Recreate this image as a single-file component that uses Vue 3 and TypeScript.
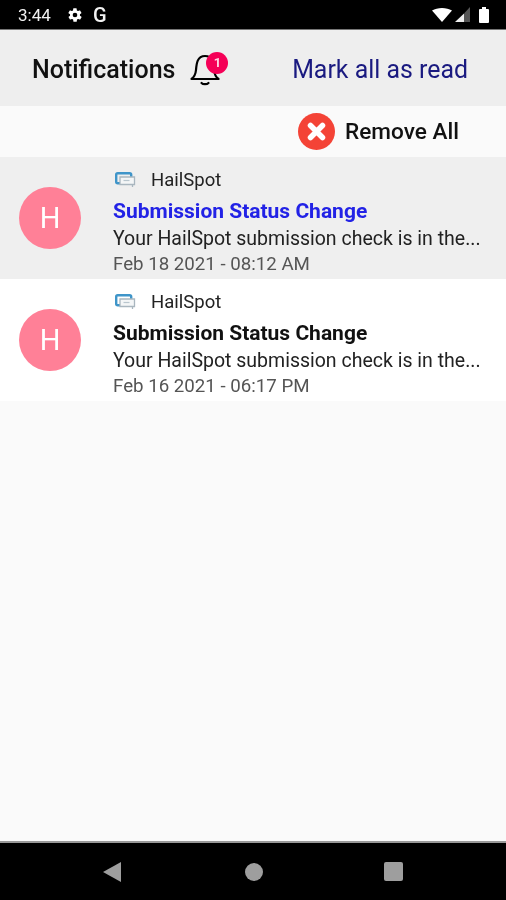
<script setup lang="ts">
interface Notice {
  app: string
  title: string
  body: string
  date: string
  unread: boolean
}

const notices: Notice[] = [
  {
    app: 'HailSpot',
    title: 'Submission Status Change',
    body: 'Your HailSpot submission check is in the...',
    date: 'Feb 18 2021 - 08:12 AM',
    unread: true,
  },
  {
    app: 'HailSpot',
    title: 'Submission Status Change',
    body: 'Your HailSpot submission check is in the...',
    date: 'Feb 16 2021 - 06:17 PM',
    unread: false,
  },
]
</script>

<template>
  <div class="screen">
    <div class="status-bar">
      <div class="status-left">
        <span class="clock">3:44</span>
        <svg class="gear" width="16" height="16" viewBox="0 0 24 24">
          <path
            fill="#fff"
            fill-rule="evenodd"
            d="M19.4 13a7.5 7.5 0 0 0 0-2l2.1-1.6a.5.5 0 0 0 .1-.6l-2-3.5a.5.5 0 0 0-.6-.2l-2.5 1a7.3 7.3 0 0 0-1.7-1l-.4-2.7a.5.5 0 0 0-.5-.4h-4a.5.5 0 0 0-.5.4l-.4 2.7a7.3 7.3 0 0 0-1.7 1l-2.5-1a.5.5 0 0 0-.6.2l-2 3.5a.5.5 0 0 0 .1.6L4.6 11a7.5 7.5 0 0 0 0 2l-2.1 1.6a.5.5 0 0 0-.1.6l2 3.5c.1.2.4.3.6.2l2.5-1c.5.4 1.1.7 1.7 1l.4 2.7c0 .2.2.4.5.4h4c.3 0 .5-.2.5-.4l.4-2.7c.6-.3 1.2-.6 1.7-1l2.500 1c.2.1.5 0 .6-.2l2-3.5a.5.5 0 0 0-.1-.6zM12 15.500a3.500 3.500 0 1 1 0-7 3.500 3.500 0 0 1 0 7z"
          />
        </svg>
        <span class="g-mark">G</span>
      </div>
      <div class="status-right">
        <svg width="20" height="14" viewBox="0 0 20 14">
          <path fill="#fff" d="M0 2.500C2.800.9 6.200 0 10 0s7.200.9 10 2.500L10 14z" />
        </svg>
        <svg class="signal" width="15" height="15" viewBox="0 0 15 15">
          <path fill="#eee" d="M9 15V6.500L0 15z" />
          <path fill="#555" d="M9 15V6.500L15 0v15z" />
        </svg>
        <svg class="battery" width="10" height="16" viewBox="0 0 10 16">
          <path fill="#fff" d="M3 0h4v2h2a1 1 0 0 1 1 1v12a1 1 0 0 1-1 1H1a1 1 0 0 1-1-1V3a1 1 0 0 1 1-1h2z" />
        </svg>
      </div>
    </div>

    <header class="top-bar">
      <div class="title-wrap">
        <h1 class="page-title">Notifications</h1>
        <div class="bell">
          <svg width="30" height="33" viewBox="0 0 30 33" fill="none" stroke="#000" stroke-width="2.200">
            <path d="M1.500 26c2.800-2 4-4 4.500-9 .5-6 1-14 9-14s8.500 8 9 14c.5 5 1.700 7 4.500 9z" stroke-linejoin="round" />
            <path d="M11.500 30c1.500 1.600 5.500 1.600 7 0" stroke-linecap="round" />
          </svg>
          <span class="badge">1</span>
        </div>
      </div>
      <a class="mark-read">Mark all as read</a>
    </header>

    <div class="action-row">
      <svg width="37" height="37" viewBox="0 0 37 37">
        <circle cx="18.500" cy="18.500" r="18.500" fill="#f44336" />
        <path d="M12.500 12.500l12 12M24.500 12.500l-12 12" stroke="#fff" stroke-width="5.500" stroke-linecap="round" />
      </svg>
      <span class="remove-label">Remove All</span>
    </div>

    <ul class="list">
      <li v-for="(item, i) in notices" :key="i" class="item" :class="{ unread: item.unread }">
        <div class="avatar">H</div>
        <div class="content">
          <div class="app-row">
            <svg width="21" height="16" viewBox="0 0 21 16" fill="none">
              <rect x="1.200" y="1.200" width="15" height="10" rx="1.500" stroke="#3f95c9" stroke-width="2.400" />
              <path d="M5 5h14.500v7.500H5z" fill="#f4f6f7" stroke="#a9b6bf" stroke-width="1.300" />
              <path d="M8.500 8.500h6" stroke="#b9c6ce" stroke-width="1.200" />
              <path d="M17.500 12.500v2.500" stroke="#a9b6bf" stroke-width="1.300" />
            </svg>
            <span class="app-name">{{ item.app }}</span>
          </div>
          <div class="title">{{ item.title }}</div>
          <div class="body">{{ item.body }}</div>
          <div class="date">{{ item.date }}</div>
        </div>
      </li>
    </ul>

    <div class="spacer"></div>

    <nav class="nav-bar">
      <svg class="nav-back" width="20" height="22" viewBox="0 0 20 22">
        <path fill="#9e9e9e" d="M19 1v20L1 11z" />
      </svg>
      <span class="nav-circle"></span>
      <span class="nav-square"></span>
    </nav>
  </div>
</template>

<style>
html,
body {
  margin: 0;
  background: #fafafa;
}
</style>

<style scoped>
.screen {
  display: flex;
  flex-direction: column;
  width: 506px;
  height: 900px;
  overflow: hidden;
  background: #fafafa;
  font-family: Roboto, "Liberation Sans", sans-serif;
  color: #111;
  filter: blur(0.4px);
}

.status-bar {
  display: flex;
  align-items: center;
  justify-content: space-between;
  flex: none;
  box-sizing: border-box;
  height: 30px;
  padding: 0 17px 0 18px;
  background: #000;
  border-bottom: 1px solid #777;
  color: #f2f2f2;
}

.status-left {
  display: flex;
  align-items: center;
}

.clock {
  width: 49px;
  font-size: 17px;
}

.gear {
  margin-right: 10px;
}

.g-mark {
  font-size: 20px;
  font-weight: 500;
  line-height: 1;
}

.status-right {
  display: flex;
  align-items: center;
  gap: 3px;
}

.battery {
  margin-left: 6px;
}

.top-bar {
  display: flex;
  align-items: center;
  justify-content: space-between;
  flex: none;
  box-sizing: border-box;
  height: 76px;
  padding: 2px 38px 0 32px;
  background: #eeeeee;
}

.title-wrap {
  display: flex;
  align-items: center;
  gap: 15px;
}

.page-title {
  margin: 0;
  font-size: 25px;
  font-weight: 500;
  color: #111;
}

.bell {
  position: relative;
  width: 30px;
  height: 33px;
}

.badge {
  position: absolute;
  top: -1px;
  right: -8px;
  width: 22px;
  height: 22px;
  border-radius: 50%;
  background: #f50057;
  color: #ffd5e2;
  font-size: 13px;
  font-weight: 700;
  line-height: 22px;
  text-align: center;
}

.mark-read {
  font-size: 24.900px;
  color: #1a1a80;
}

.action-row {
  display: flex;
  align-items: center;
  justify-content: flex-end;
  flex: none;
  gap: 10px;
  box-sizing: border-box;
  height: 51px;
  padding-right: 47px;
}

.remove-label {
  font-size: 22.600px;
  font-weight: 500;
  color: #111;
}

.list {
  flex: none;
  margin: 0;
  padding: 0;
  list-style: none;
}

.item {
  display: flex;
  align-items: center;
  box-sizing: border-box;
  height: 122px;
  padding-left: 19px;
  background: #fff;
}

.item.unread {
  background: #efefef;
}

.avatar {
  display: flex;
  align-items: center;
  justify-content: center;
  flex: none;
  width: 62px;
  height: 62px;
  border-radius: 50%;
  background: #ff8097;
  color: #fff;
  font-size: 29px;
}

.content {
  flex: 1;
  align-self: flex-start;
  min-width: 0;
  margin-left: 32px;
  padding-top: 8px;
}

.app-row {
  display: flex;
  align-items: center;
  gap: 15px;
  height: 30px;
  margin-left: 2px;
}

.app-name {
  font-size: 18.500px;
  color: #222;
}

.title {
  height: 32px;
  font-size: 21px;
  font-weight: 700;
  line-height: 32px;
  color: #111;
}

.unread .title {
  color: #2222e6;
}

.body {
  height: 24px;
  font-size: 19.500px;
  line-height: 24px;
  white-space: nowrap;
  color: #222;
}

.date {
  height: 26px;
  font-size: 18.700px;
  line-height: 26px;
  color: #555;
}

.spacer {
  flex: 1;
}

.nav-bar {
  display: flex;
  align-items: center;
  justify-content: center;
  flex: none;
  gap: 121px;
  box-sizing: border-box;
  height: 59px;
  padding-left: 2px;
  background: #000;
  border-top: 2px solid #999;
}

.nav-back {
  margin: 0 2px 0 -4px;
}

.nav-circle {
  width: 18px;
  height: 18px;
  border-radius: 50%;
  background: #9e9e9e;
}

.nav-square {
  width: 19px;
  height: 19px;
  border-radius: 2px;
  background: #9e9e9e;
}
</style>
